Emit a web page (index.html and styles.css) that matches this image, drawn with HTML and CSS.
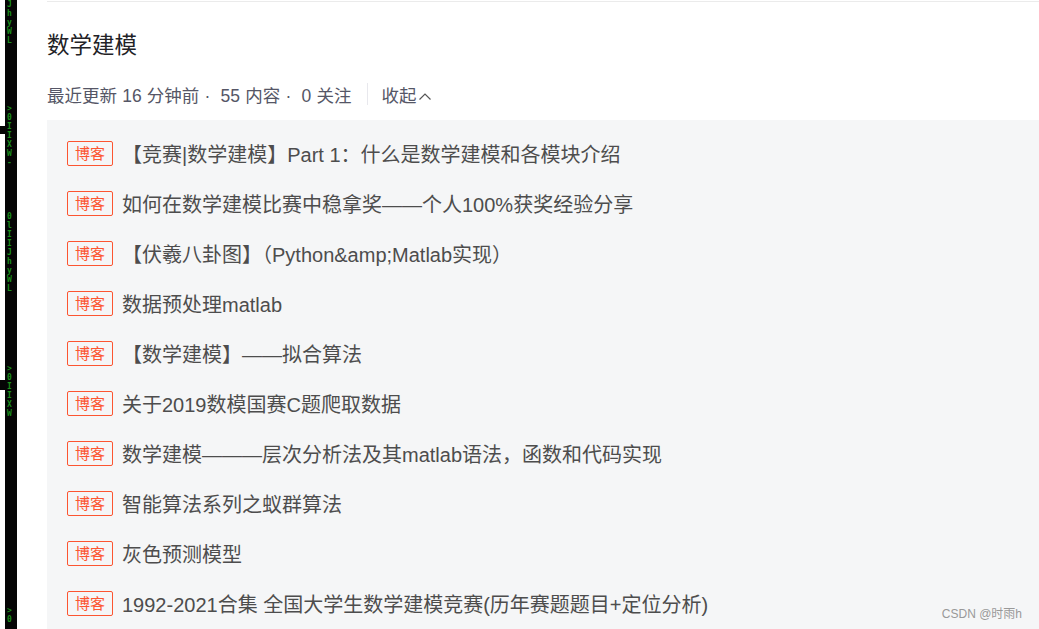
FILE: index.html
```html
<html>
    <head>
        <meta charset="utf-8">
        <title>数学建模</title>
        <link rel="stylesheet" href="styles.css">
    </head>
    <body>
        <div class="term">
            <div class="notch notch-a"></div>
            <div class="notch notch-b"></div>
            <div class="glyphs g1">JhyWL</div>
            <div class="glyphs g2">&gt;0IIXW-</div>
            <div class="glyphs g3">0lIIJhyWL</div>
            <div class="glyphs g4">&gt;0IIXW</div>
            <div class="glyphs g5">&gt;0</div>
        </div>

        <div class="main">
            <div class="rule"></div>
            <h2 class="column-title">数学建模</h2>
            <div class="meta">
                <span>最近更新 16 分钟前 ·&nbsp; 55 内容 ·&nbsp; 0 关注</span>
                <span class="divider"></span>
                <span class="fold">收起<svg width="14" height="10" viewBox="0 0 14 10"><path d="M1.5 8.5 L7 3 L12.5 8.5" fill="none" stroke="#555" stroke-width="1.2"/></svg></span>
            </div>

            <ul class="list">
                <li><span class="tag">博客</span><span class="title">【竞赛|数学建模】Part 1：什么是数学建模和各模块介绍</span></li>
                <li><span class="tag">博客</span><span class="title">如何在数学建模比赛中稳拿奖——个人100%获奖经验分享</span></li>
                <li><span class="tag">博客</span><span class="title">【伏羲八卦图】（Python&amp;amp;Matlab实现）</span></li>
                <li><span class="tag">博客</span><span class="title">数据预处理matlab</span></li>
                <li><span class="tag">博客</span><span class="title">【数学建模】——拟合算法</span></li>
                <li><span class="tag">博客</span><span class="title">关于2019数模国赛C题爬取数据</span></li>
                <li><span class="tag">博客</span><span class="title">数学建模———层次分析法及其matlab语法，函数和代码实现</span></li>
                <li><span class="tag">博客</span><span class="title">智能算法系列之蚁群算法</span></li>
                <li><span class="tag">博客</span><span class="title">灰色预测模型</span></li>
                <li><span class="tag">博客</span><span class="title">1992-2021合集 全国大学生数学建模竞赛(历年赛题题目+定位分析)</span></li>
            </ul>
        </div>

        <div class="watermark">CSDN @时雨h</div>
    </body>
</html>
```

FILE: styles.css
```css
body {
    margin: 0;
    height: 629px;
    overflow: hidden;
    display: flex;
    background: #fff;
    font-family: "Liberation Sans", "Noto Sans CJK SC", sans-serif;
}
.term {
    position: relative;
    width: 12px;
    margin-left: 5px;
    flex: none;
    background: #050505;
}
.notch {
    position: absolute;
    left: -5px;
    width: 5px;
    background: #050505;
}
.notch-a {
    top: 126px;
    height: 8px;
}
.notch-b {
    top: 380px;
    height: 10px;
}
.glyphs {
    position: absolute;
    left: 2px;
    width: 8px;
    font-family: "DejaVu Sans Mono", monospace;
    font-size: 8px;
    font-weight: bold;
    line-height: 9px;
    color: #1a8f1a;
    word-break: break-all;
}
.g1 { top: 0; }
.g2 { top: 104px; }
.g3 { top: 212px; }
.g4 { top: 364px; }
.g5 { top: 606px; }

.main {
    flex: 1;
    display: flex;
    flex-direction: column;
    padding-left: 30px;
    min-width: 0;
    overflow: hidden;
}
.rule {
    margin-top: 1px;
    height: 1px;
    border-top: 1px solid #ebebeb;
}
.column-title {
    margin: 0;
    padding-top: 27px;
    font-size: 22.5px;
    font-weight: 400;
    line-height: 32px;
    color: #222226;
}
.meta {
    display: flex;
    align-items: center;
    margin-top: 19px;
    height: 26px;
    font-size: 17.5px;
    color: #555666;
}
.meta > span:first-child {
    word-spacing: 0.3px;
}
.divider {
    width: 1px;
    height: 22px;
    background: #e8e8ed;
    margin: 0 13px 0 16px;
}
.fold svg {
    margin-left: 2px;
    vertical-align: 1px;
}
.list {
    flex: 1;
    list-style: none;
    margin: 13px 0 0;
    padding: 8px 0 0 20px;
    background: #f5f6f7;
}
.list li {
    display: flex;
    align-items: center;
    height: 50px;
}
.tag {
    flex: none;
    box-sizing: border-box;
    width: 46px;
    height: 25px;
    line-height: 23px;
    text-align: center;
    border: 1px solid #fc5531;
    border-radius: 2px;
    font-size: 15px;
    color: #fc5531;
}
.title {
    margin-left: 9px;
    font-size: 20px;
    color: #4d4d4d;
    white-space: nowrap;
}
.watermark {
    position: absolute;
    right: 17px;
    bottom: 8px;
    font-size: 12px;
    color: #999;
}
```
